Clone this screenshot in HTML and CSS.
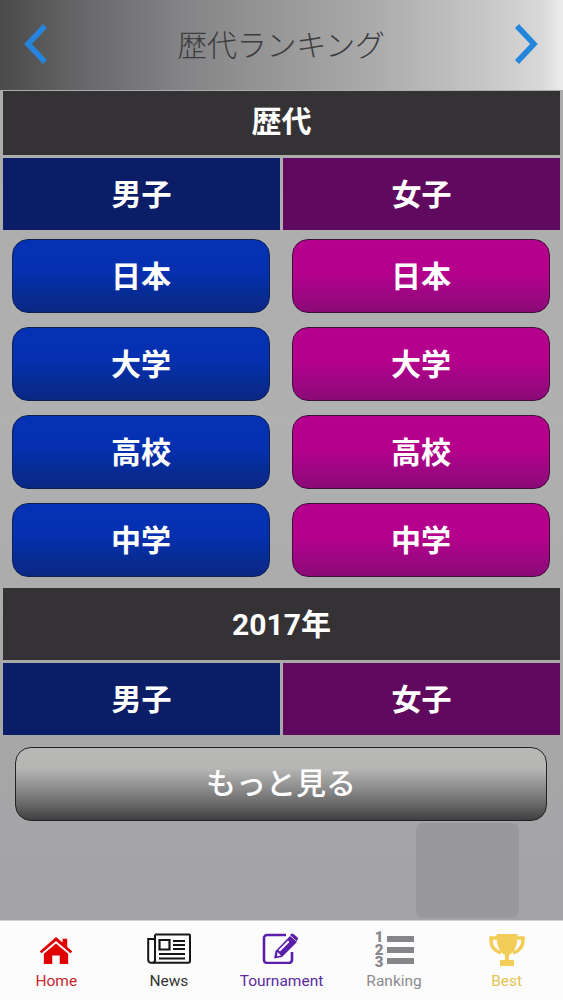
FILE: index.html
```html
<!DOCTYPE html>
<html lang="ja">
<head>
<meta charset="utf-8">
<title>歴代ランキング</title>
<link rel="stylesheet" href="styles.css">
</head>
<body>
<div class="app">
  <header class="topbar">
    <svg class="chev" viewBox="0 0 26 42"><path d="M22 3 L5 21 L22 39" /></svg>
    <h1 class="title">歴代ランキング</h1>
    <svg class="chev" viewBox="0 0 26 42"><path d="M4 3 L21 21 L4 39" /></svg>
  </header>
  <main class="content">
    <div class="section first">歴代</div>
    <div class="genders">
      <div class="gender male">男子</div>
      <div class="gender female">女子</div>
    </div>
    <div class="buttons">
      <a class="btn blue">日本</a><a class="btn pink">日本</a>
      <a class="btn blue">大学</a><a class="btn pink">大学</a>
      <a class="btn blue">高校</a><a class="btn pink">高校</a>
      <a class="btn blue">中学</a><a class="btn pink">中学</a>
    </div>
    <div class="section second">2017年</div>
    <div class="genders">
      <div class="gender male">男子</div>
      <div class="gender female">女子</div>
    </div>
    <a class="more">もっと見る</a>
    <div class="overlay"></div>
  </main>
  <nav class="tabs">
    <div class="tab home">
      <svg class="icon" viewBox="0 0 36 30"><path fill="#e00000" d="M18 1 L25 7 V3 H30 V11.5 L35.5 16.5 L33.5 18.6 L18 5.4 L2.5 18.6 L.5 16.5 Z M18 8 L31 19 V30 H22 V21 H14 V30 H5 V19 Z"/></svg>
      <span>Home</span>
    </div>
    <div class="tab news">
      <svg class="icon" viewBox="0 0 44 31"><g fill="none" stroke="#151515" stroke-width="2"><path d="M8 1.5 H42 a1 1 0 0 1 1 1 V28 a1.8 1.8 0 0 1 -1.8 1.8 H4 a2.8 2.8 0 0 1 -2.8 -2.8 V6 H8"/><path d="M8 1.5 V27 a2.8 2.8 0 0 1 -2 2.8"/></g><path fill="none" stroke="#151515" stroke-width="2.2" d="M12.5 7 H22.5 V16.5 H12.5 Z"/><path stroke="#151515" stroke-width="2.2" d="M26 8 H38 M26 12 H38 M26 16 H38 M12 21 H38 M12 25.5 H38"/></svg>
      <span>News</span>
    </div>
    <div class="tab tournament">
      <svg class="icon" viewBox="0 0 36 31"><path fill="none" stroke="#5a1fa8" stroke-width="2.6" d="M30 19 V27 a3 3 0 0 1 -3 3 H5 a3 3 0 0 1 -3 -3 V5 a3 3 0 0 1 3 -3 H24"/><path fill="#5a1fa8" d="M28 3 L35 9 L20 24 L12 25.5 L13.5 18 Z"/><path fill="#fff" d="M15.5 19 L19 22.5 L15 23.3 Z M26 7.5 L27.5 9 L18 18.5 L16.5 17 Z"/><path fill="#5a1fa8" d="M29 1 a2 2 0 0 1 2.5 0 L35.5 4.500 a2 2 0 0 1 0 2.500 L34.500 8 L28 2 Z"/></svg>
      <span>Tournament</span>
    </div>
    <div class="tab ranking">
      <div class="rank-icon">
        <div class="rank-nums">1 2 3</div>
        <div class="rank-bars"><i></i><i></i><i></i></div>
      </div>
      <span>Ranking</span>
    </div>
    <div class="tab best">
      <svg class="icon" viewBox="0 0 36 34"><path fill="none" stroke="#f2cd58" stroke-width="3.6" d="M9 5 H2 C1.500 13 5 18 12 20 M27 5 H34 C34.500 13 31 18 24 20"/><path fill="#f2cd58" d="M7.500 1 H28.500 C28.500 12 26 19 20 22 V27 H25 V33 H11 V27 H16 V22 C10 19 7.500 12 7.500 1 Z"/></svg>
      <span>Best</span>
    </div>
  </nav>
</div>
</body>
</html>
```

FILE: styles.css
```css
* { box-sizing: border-box; }
html, body { margin: 0; padding: 0; }
body { font-family: "Noto Sans CJK JP", "Noto Sans", sans-serif; }
.app { width: 563px; height: 1000px; display: flex; flex-direction: column; overflow: hidden; background: #a5a4a6; }

.topbar {
  height: 90px; flex: none; display: flex; align-items: center; justify-content: space-between;
  padding: 0 24px 2px 23px;
  background: linear-gradient(to right, #4a4a4b 0%, #686769 15%, #858486 33%, #999899 50%, #adadae 68%, #c8c8c9 87%, #d8d8d9 96%, #ececec 100%);
}
.chev { width: 26px; height: 42px; }
.chev path { fill: none; stroke: #2585dc; stroke-width: 5.5; }
.title { margin: 0 0 3px; font-size: 30px; line-height: 40px; font-weight: 300; color: #3c3c3e; letter-spacing: -.2px; }

.content { flex: 1; position: relative; padding: 1px 3px 0; background: linear-gradient(to bottom, #acacac 0%, #b0b0b0 40%, #a8a8a9 75%, #a3a2a5 100%); }
.section { background: #343235; color: #fff; font-weight: 700; display: flex; align-items: center; justify-content: center; font-size: 30px; }
.section.first { height: 64px; padding-bottom: 8px; }
.section.second { height: 72px; padding-bottom: 4px; font-family: Roboto, "Noto Sans CJK JP", sans-serif; margin-top: 11px; }

.genders { display: grid; grid-template-columns: 277px 277px; gap: 3px; margin-top: 3px; }
.gender { height: 72px; padding-bottom: 4px; display: flex; align-items: center; justify-content: center; color: #fff; font-size: 30px; font-weight: 700; }
.male { background: #0b1d66; }
.female { background: #5f0a5e; }

.buttons { display: grid; grid-template-columns: 258px 258px; column-gap: 22px; row-gap: 14px; padding: 9px 0 0 9px; }
.btn { height: 74px; padding-bottom: 4px; border-radius: 16px; border: 1.5px solid #122050; color: #fff; font-size: 30px; font-weight: 700; display: flex; align-items: center; justify-content: center; }
.blue { background: linear-gradient(to bottom, #0532b4 0%, #0531b0 45%, #072c98 72%, #0a2784 100%); }
.pink { background: linear-gradient(to bottom, #b6008e 0%, #b4008c 45%, #a00684 72%, #8a0a76 100%); border-color: #3e1038; }

.more {
  display: flex; align-items: center; justify-content: center;
  height: 74px; padding-bottom: 6px; margin: 12px 13px 0 12px; border-radius: 16px; border: 1.5px solid #222;
  color: #fff; font-size: 30px; font-weight: 500;
  background: linear-gradient(to bottom, #b8b8b7 0%, #b6b6b5 28%, #8e8e8e 55%, #666566 80%, #403e41 100%);
}
.overlay { position: absolute; left: 416px; top: 733px; width: 103px; height: 95px; border-radius: 8px; background: #99989a; }

.tabs { height: 80px; flex: none; display: grid; grid-template-columns: repeat(5, 112.600px); background: #fdfcfd; border-top: 1px solid #d0d0d0; }
.tab { display: flex; flex-direction: column; align-items: center; font-family: Roboto, sans-serif; font-size: 15.5px; line-height: 18px; position: relative; }
.tab span { position: absolute; top: 51px; white-space: nowrap; }
.icon { display: block; position: absolute; }
.home { color: #c8262c; }
.home .icon { width: 34px; height: 28px; top: 15px; }
.news { color: #333; }
.news .icon { width: 44px; height: 31px; top: 12px; }
.tournament { color: #5a2aa0; }
.tournament .icon { width: 36px; height: 31px; top: 12px; left: 37px; }
.ranking { color: #8b8b8d; }
.best { color: #e3c450; }
.best .icon { width: 36px; height: 34px; top: 12px; }
.rank-icon { position: absolute; top: 10px; left: 37px; display: flex; gap: 3px; }
.rank-nums { font-size: 15px; line-height: 12.5px; font-weight: 900; color: #85858a; width: 9px; }
.rank-bars { display: flex; flex-direction: column; gap: 5px; padding-top: 5px; }
.rank-bars i { display: block; width: 27px; height: 6px; background: #85858a; }
```
